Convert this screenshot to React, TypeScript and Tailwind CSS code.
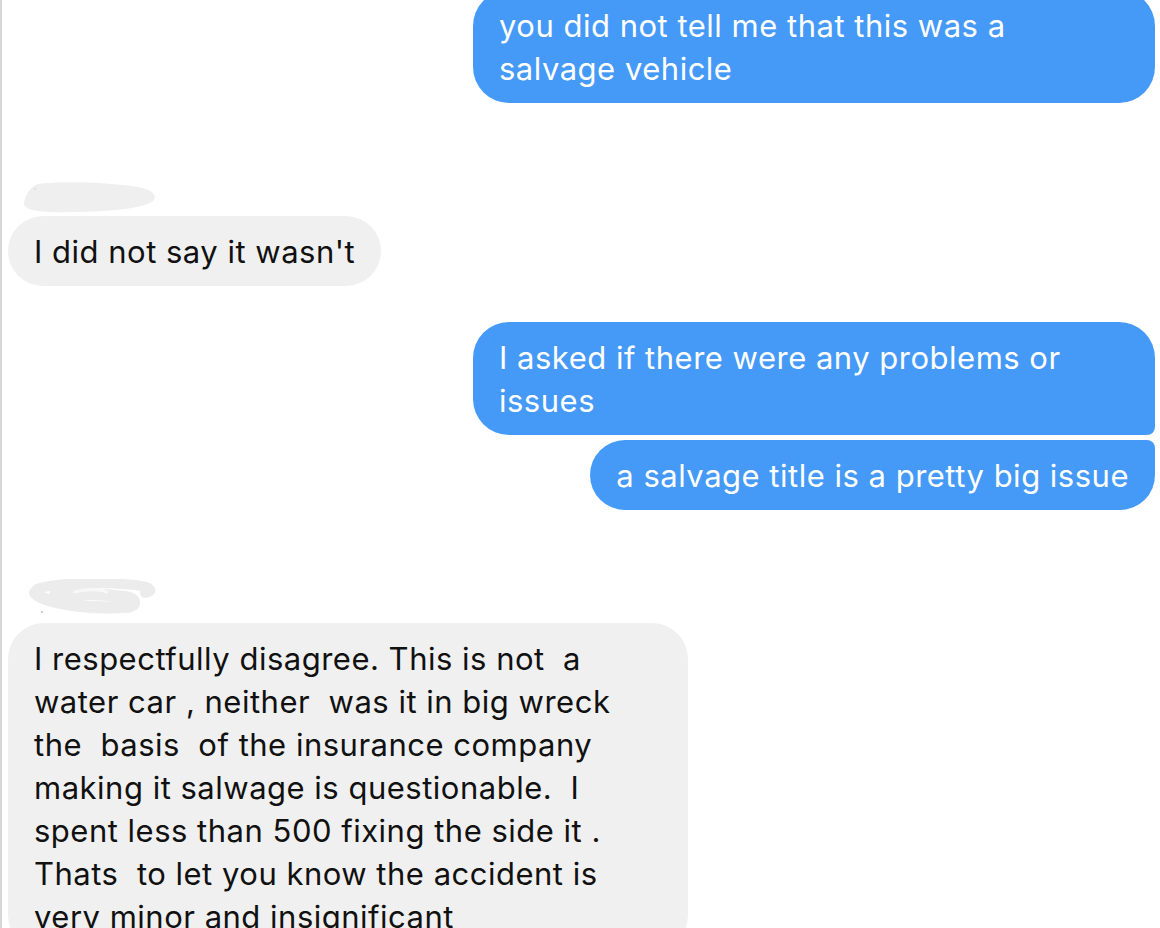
import React from "react";

const font = { fontFamily: "Inter, 'Noto Sans', sans-serif" };

function Lines({ lines }: { lines: string[] }) {
  return (
    <>
      {lines.map((l, i) => (
        <div key={i} className="whitespace-pre">
          {l}
        </div>
      ))}
    </>
  );
}

function Blob1() {
  return (
    <svg width="140" height="32" viewBox="0 0 140 32" className="ml-[12px]">
      <path
        d="M18 3 C40 0 80 1 112 5 C128 7 138 12 134 19 C128 27 90 31 50 31 C18 32 2 29 4 21 C6 13 10 6 18 3 Z"
        fill="#efefef"
      />
      <circle cx="15" cy="8" r="0.8" fill="#cfcfcf" />
    </svg>
  );
}

function Blob2() {
  return (
    <svg width="140" height="36" viewBox="0 0 140 36" className="ml-[17px]">
      <path
        d="M12 10 C30 4 70 2 110 6 C126 8 130 12 120 14"
        stroke="#ececec"
        strokeWidth="10"
        strokeLinecap="round"
        fill="none"
      />
      <path
        d="M10 14 C20 24 60 30 100 28 C112 27 112 20 100 18 C80 15 50 14 30 16"
        stroke="#ececec"
        strokeWidth="12"
        strokeLinecap="round"
        fill="none"
      />
      <path
        d="M50 13 C60 10 75 10 82 13"
        stroke="#f8f8f8"
        strokeWidth="3"
        strokeLinecap="round"
        fill="none"
      />
      <circle cx="17" cy="33" r="1" fill="#bdbdbd" />
    </svg>
  );
}

export default function App() {
  return (
    <div
      className="flex h-[928px] w-full flex-col overflow-hidden border-l-2 border-[#d6d6d6] bg-white pl-[6px] pr-[5px] text-[31px] leading-[43px] tracking-[0.5px] text-[#111111]"
      style={font}
    >
      <div className="-mt-[10px] ml-auto w-[682px] rounded-[36px] bg-[#4599f7] px-[26px] pb-[13px] pt-[14px] text-white">
        <Lines lines={["you did not tell me that this was a", "salvage vehicle"]} />
      </div>

      <div className="mt-[78px]">
        <Blob1 />
      </div>

      <div className="mt-[3px] self-start rounded-[35px] bg-[#f0f0f0] px-[26px] py-[13.5px]">
        I did not say it wasn't
      </div>

      <div className="ml-auto mt-[36px] w-[682px] rounded-[36px] rounded-br-[8px] bg-[#4599f7] px-[26px] py-[13.5px] text-white">
        <Lines lines={["I asked if there were any problems or", "issues"]} />
      </div>

      <div className="ml-auto mt-[5px] rounded-[35px] rounded-tr-[8px] bg-[#4599f7] px-[26px] py-[13.5px] text-white">
        a salvage title is a pretty big issue
      </div>

      <div className="mt-[69px]">
        <Blob2 />
      </div>

      <div className="mt-[8px] w-[680px] shrink-0 rounded-[36px] bg-[#f0f0f0] px-[26px] py-[13.5px]">
        <Lines
          lines={[
            "I respectfully disagree. This is not  a",
            "water car , neither  was it in big wreck",
            "the  basis  of the insurance company",
            "making it salwage is questionable.  I",
            "spent less than 500 fixing the side it .",
            "Thats  to let you know the accident is",
            "very minor and insignificant",
          ]}
        />
      </div>
    </div>
  );
}
